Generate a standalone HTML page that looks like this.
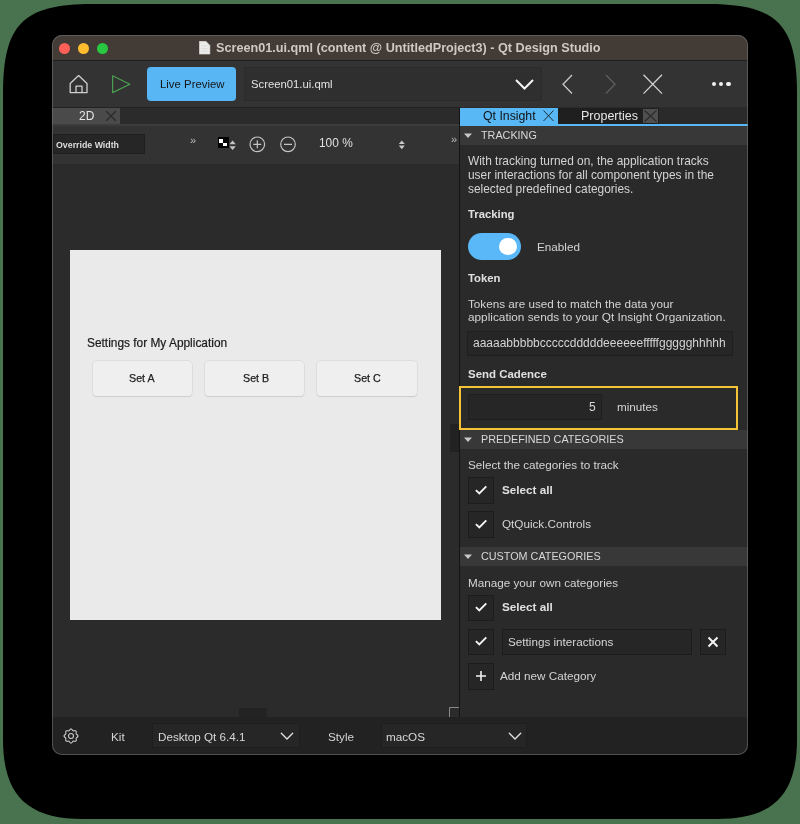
<!DOCTYPE html>
<html><head><meta charset="utf-8">
<style>
*{margin:0;padding:0;box-sizing:border-box}
html,body{width:800px;height:824px;overflow:hidden;background:#49734e;font-family:"Liberation Sans",sans-serif}
.a{position:absolute}
.t{white-space:nowrap;will-change:transform}
#win{position:absolute;left:0;top:0;width:800px;height:824px;clip-path:inset(35px 52px 69px 52px round 10px)}
</style></head><body>
<svg class="a" style="left:0;top:0" width="800" height="824"><path d="M93 4 H707 C777 4 797 24 797 94 V739 C797 795 773 819 717 819 H83 C27 819 3 795 3 739 V94 C3 24 23 4 93 4 Z" fill="#000"/></svg>
<div id="win">
<div class="a" style="left:52px;top:35px;width:696px;height:720px;background:#2b2b2b;"></div>
<div class="a" style="left:52px;top:35px;width:696px;height:26px;background:#433b35;"></div>
<div class="a" style="left:52px;top:60px;width:696px;height:1px;background:#1e1e1e;"></div>
<div class="a" style="left:58.849999999999994px;top:42.5px;width:11.5px;height:11.5px;background:#fe5f57;border-radius:50%"></div>
<div class="a" style="left:77.75px;top:42.5px;width:11.5px;height:11.5px;background:#febc2e;border-radius:50%"></div>
<div class="a" style="left:96.65px;top:42.5px;width:11.5px;height:11.5px;background:#28c840;border-radius:50%"></div>
<svg class="a" style="left:198.9px;top:40.6px" width="12" height="14" viewBox="0 0 12 14"><path d="M0.3 0.3 H6.9 L10.9 4.4 V13.1 H0.3 Z" fill="#ebebea" stroke="#d8d6d3" stroke-width="0.6"/><path d="M2.5 5 H8.5 M2.5 7.5 H8.5 M2.5 10 H8.5" stroke="#d2d2d0" stroke-width="0.6"/></svg>
<div class="a t" style="left:216px;top:41.79px;font-size:12.65px;line-height:12.65px;font-weight:bold;color:#cfc9c3;">Screen01.ui.qml (content @ UntitledProject3) - Qt Design Studio</div>
<div class="a" style="left:52px;top:61px;width:696px;height:46px;background:#333333;"></div>
<svg class="a" style="left:66px;top:72px" width="26" height="24" viewBox="0 0 26 24"><path d="M4.2 20.6 V11.4 L12.6 3.6 L21 11.4 V20.6 Z" fill="none" stroke="#d0d0d0" stroke-width="1.3" stroke-linejoin="round"/><path d="M10 20.6 V14.2 H16 V20.6" fill="none" stroke="#d0d0d0" stroke-width="1.3" stroke-linejoin="round"/></svg>
<svg class="a" style="left:108px;top:72px" width="26" height="24" viewBox="0 0 26 24"><path d="M4.6 3.8 L21.8 12.2 L4.6 20.6 Z" fill="none" stroke="#4a9e4f" stroke-width="1.25" stroke-linejoin="round"/></svg>
<div class="a" style="left:147px;top:67px;width:89px;height:34px;background:#58b6f5;border-radius:4px"></div>
<div class="a t" style="left:159.5px;top:78.95px;font-size:11.4px;line-height:11.4px;font-weight:normal;color:#161616;">Live Preview</div>
<div class="a" style="left:244px;top:67px;width:298px;height:34px;background:#2f2f2f;border:1px solid #2b2b2b"></div>
<div class="a t" style="left:251px;top:79.03px;font-size:11.3px;line-height:11.3px;font-weight:normal;color:#e2e2e2;">Screen01.ui.qml</div>
<svg class="a" style="left:512px;top:76px" width="26" height="16" viewBox="0 0 26 16"><path d="M4 4 L12.5 12.5 L21 4" fill="none" stroke="#f4f4f4" stroke-width="2"/></svg>
<svg class="a" style="left:558px;top:72px" width="20" height="24" viewBox="0 0 20 24"><path d="M14 3 L5 12.2 L14 21.5" fill="none" stroke="#c8c8c8" stroke-width="1.3"/></svg>
<svg class="a" style="left:600px;top:72px" width="20" height="24" viewBox="0 0 20 24"><path d="M6 3 L15 12.2 L6 21.5" fill="none" stroke="#5e5e5e" stroke-width="1.3"/></svg>
<svg class="a" style="left:640px;top:72px" width="26" height="24" viewBox="0 0 26 24"><path d="M3.5 2.8 L22 21.6 M22 2.8 L3.5 21.6" fill="none" stroke="#d0d0d0" stroke-width="1.3"/></svg>
<div class="a" style="left:711.5999999999999px;top:82.1px;width:4.400000000000091px;height:4.400000000000006px;background:#f0f0f0;border-radius:50%"></div>
<div class="a" style="left:719.0px;top:82.1px;width:4.400000000000091px;height:4.400000000000006px;background:#f0f0f0;border-radius:50%"></div>
<div class="a" style="left:726.4px;top:82.1px;width:4.400000000000091px;height:4.400000000000006px;background:#f0f0f0;border-radius:50%"></div>
<div class="a" style="left:52px;top:107px;width:408px;height:1px;background:#222222;"></div>
<div class="a" style="left:52px;top:108px;width:408px;height:16px;background:#2b2b2b;"></div>
<div class="a" style="left:52px;top:108px;width:68px;height:16px;background:#4a4a4a;"></div>
<div class="a t" style="left:78.5px;top:110.34px;font-size:12px;line-height:12px;font-weight:normal;color:#e6e6e6;">2D</div>
<svg class="a" style="left:104px;top:109px" width="14" height="14" viewBox="0 0 14 14"><path d="M2 2 L12 12 M12 2 L2 12" stroke="#2a2a2a" stroke-width="1.2"/></svg>
<div class="a" style="left:52px;top:124px;width:408px;height:2px;background:#3c3c3c;"></div>
<div class="a" style="left:52px;top:126px;width:408px;height:38px;background:#333333;"></div>
<div class="a" style="left:53px;top:134px;width:92px;height:20px;background:#262626;border:1px solid #1f1f1f"></div>
<div class="a t" style="left:55.7px;top:140.55px;font-size:8.8px;line-height:8.8px;font-weight:bold;color:#dcdcdc;">Override Width</div>
<div class="a t" style="left:190px;top:134.69px;font-size:11px;line-height:11px;font-weight:normal;color:#bbbbbb;">&#187;</div>
<div class="a" style="left:217.5px;top:137.3px;width:11.199999999999989px;height:10.5px;background:#000;"></div>
<div class="a" style="left:219.3px;top:138.8px;width:3.8999999999999773px;height:3.8999999999999773px;background:#fff;"></div>
<div class="a" style="left:223.2px;top:142.7px;width:3.6000000000000227px;height:3.6000000000000227px;background:#fff;"></div>
<svg class="a" style="left:229px;top:139.5px" width="8" height="11" viewBox="0 0 8 11"><path d="M0.4 4.2 L3.6 0.4 L6.8 4.2 Z M0.4 6.3 L3.6 9.9 L6.8 6.3 Z" fill="#c4c4c4"/></svg>
<svg class="a" style="left:248px;top:135px" width="18" height="18" viewBox="0 0 18 18"><circle cx="9.3" cy="9.3" r="7.3" fill="none" stroke="#c4c4c4" stroke-width="1.2"/><path d="M9.3 5.3 V13.3 M5.3 9.3 H13.3" stroke="#c4c4c4" stroke-width="1.2"/></svg>
<svg class="a" style="left:279px;top:135px" width="18" height="18" viewBox="0 0 18 18"><circle cx="9" cy="9.3" r="7.3" fill="none" stroke="#c4c4c4" stroke-width="1.2"/><path d="M5 9.3 H13" stroke="#c4c4c4" stroke-width="1.2"/></svg>
<div class="a t" style="left:318.7px;top:138.13px;font-size:11.9px;line-height:11.9px;font-weight:normal;color:#e0e0e0;">100 %</div>
<svg class="a" style="left:398px;top:140px" width="8" height="10" viewBox="0 0 8 10"><path d="M0.8 4 L3.8 0.5 L6.8 4 Z M0.8 5.6 L3.8 9.2 L6.8 5.6 Z" fill="#c8c8c8"/></svg>
<div class="a t" style="left:450.6px;top:134.19px;font-size:11px;line-height:11px;font-weight:normal;color:#bbbbbb;">&#187;</div>
<div class="a" style="left:52px;top:164px;width:408px;height:553px;background:#2b2b2b;"></div>
<div class="a" style="left:70px;top:250px;width:371px;height:370px;background:#eaeaea;"></div>
<div class="a t" style="left:87.4px;top:338.23px;font-size:11.9px;line-height:11.9px;font-weight:normal;color:#1a1a1a;-webkit-text-stroke:0.2px #1a1a1a">Settings for My Application</div>
<div class="a" style="left:92.6px;top:360.5px;width:99.20000000000002px;height:35.5px;background:#efefef;border-radius:4px;box-shadow:0 0 0 0.5px #d2d2d2,0 1px 1px #c8c8c8"></div>
<div class="a t" style="left:129.4px;top:373.34px;font-size:10.7px;line-height:10.7px;font-weight:normal;color:#222222;-webkit-text-stroke:0.25px #222">Set A</div>
<div class="a" style="left:205.2px;top:360.5px;width:99.30000000000001px;height:35.5px;background:#efefef;border-radius:4px;box-shadow:0 0 0 0.5px #d2d2d2,0 1px 1px #c8c8c8"></div>
<div class="a t" style="left:242.5px;top:373.34px;font-size:10.7px;line-height:10.7px;font-weight:normal;color:#222222;-webkit-text-stroke:0.25px #222">Set B</div>
<div class="a" style="left:316.5px;top:360.5px;width:100.69999999999999px;height:35.5px;background:#efefef;border-radius:4px;box-shadow:0 0 0 0.5px #d2d2d2,0 1px 1px #c8c8c8"></div>
<div class="a t" style="left:353.6px;top:373.34px;font-size:10.7px;line-height:10.7px;font-weight:normal;color:#222222;-webkit-text-stroke:0.25px #222">Set C</div>
<div class="a" style="left:239px;top:708px;width:28px;height:9px;background:#232323;"></div>
<svg class="a" style="left:449px;top:707px" width="11" height="11" viewBox="0 0 11 11"><path d="M0.5 11 V0.5 H10" fill="none" stroke="#8a8a8a" stroke-width="1"/></svg>
<div class="a" style="left:459px;top:108px;width:1px;height:609px;background:#141414;"></div>
<div class="a" style="left:450.3px;top:424px;width:8.699999999999989px;height:28px;background:#222222;"></div>
<div class="a" style="left:460px;top:108px;width:288px;height:609px;background:#2a2a2a;"></div>
<div class="a" style="left:460px;top:108px;width:98px;height:16px;background:#58b8f6;"></div>
<div class="a t" style="left:482.6px;top:110.09px;font-size:12.3px;line-height:12.3px;font-weight:normal;color:#111111;">Qt Insight</div>
<svg class="a" style="left:541px;top:109px" width="14" height="14" viewBox="0 0 14 14"><path d="M2.5 1.5 L12.5 12 M12.5 1.5 L2.5 12" stroke="#1d2c36" stroke-width="1"/></svg>
<div class="a" style="left:558px;top:108px;width:101px;height:16px;background:#1f1f1f;"></div>
<div class="a t" style="left:580.5px;top:109.92px;font-size:12.5px;line-height:12.5px;font-weight:normal;color:#e6e6e6;">Properties</div>
<div class="a" style="left:659px;top:108px;width:1px;height:16px;background:#3a3a3a;"></div>
<div class="a" style="left:643px;top:109px;width:15px;height:14px;background:#505050;"></div>
<svg class="a" style="left:643px;top:109px" width="15" height="14" viewBox="0 0 15 14"><path d="M1.5 1.5 L13.5 12.5 M13.5 1.5 L1.5 12.5" stroke="#2b2b2b" stroke-width="1.1"/></svg>
<div class="a" style="left:659px;top:108px;width:89px;height:16px;background:#2a2a2a;"></div>
<div class="a" style="left:460px;top:124px;width:288px;height:2px;background:#58b8f6;"></div>
<div class="a" style="left:460px;top:126px;width:288px;height:19px;background:#383838;"></div>
<svg class="a" style="left:463px;top:133px" width="10" height="6" viewBox="0 0 10 6"><path d="M1 0.5 H9 L5 5 Z" fill="#c8c8c8"/></svg>
<div class="a t" style="left:481px;top:130.46px;font-size:10.8px;line-height:10.8px;font-weight:normal;color:#d8d8d8;">TRACKING</div>
<div class="a t" style="left:468px;top:156.13px;font-size:11.9px;line-height:11.9px;font-weight:normal;color:#d4d4d4;">With tracking turned on, the application tracks</div>
<div class="a t" style="left:468px;top:170.13px;font-size:11.9px;line-height:11.9px;font-weight:normal;color:#d4d4d4;">user interactions for all component types in the</div>
<div class="a t" style="left:468px;top:184.13px;font-size:11.9px;line-height:11.9px;font-weight:normal;color:#d4d4d4;">selected predefined categories.</div>
<div class="a t" style="left:468.4px;top:209.43px;font-size:11.3px;line-height:11.3px;font-weight:bold;color:#e0e0e0;">Tracking</div>
<div class="a" style="left:467.6px;top:233px;width:53.39999999999998px;height:27px;background:#5ab8f9;border-radius:14px"></div>
<div class="a" style="left:499.15px;top:237.95px;width:17.5px;height:17.5px;background:#ffffff;border-radius:50%"></div>
<div class="a t" style="left:536.6px;top:240.50px;font-size:11.7px;line-height:11.7px;font-weight:normal;color:#d4d4d4;">Enabled</div>
<div class="a t" style="left:468.4px;top:273.03px;font-size:11.3px;line-height:11.3px;font-weight:bold;color:#e0e0e0;">Token</div>
<div class="a t" style="left:468px;top:298.10px;font-size:11.7px;line-height:11.7px;font-weight:normal;color:#d4d4d4;">Tokens are used to match the data your</div>
<div class="a t" style="left:468px;top:311.51px;font-size:11.8px;line-height:11.8px;font-weight:normal;color:#d4d4d4;">application sends to your Qt Insight Organization.</div>
<div class="a" style="left:467px;top:330.5px;width:266px;height:25.5px;background:#262626;border:1px solid #1f1f1f"></div>
<div class="a t" style="left:473.4px;top:336.84px;font-size:12px;line-height:12px;font-weight:normal;color:#d4d4d4;">aaaaabbbbbcccccdddddeeeeeefffffggggghhhhh</div>
<div class="a t" style="left:468px;top:369.01px;font-size:11.45px;line-height:11.45px;font-weight:bold;color:#e0e0e0;">Send Cadence</div>
<div class="a" style="left:459px;top:386px;width:279px;height:44px;background:transparent;border:2.5px solid #f5c436"></div>
<div class="a" style="left:468px;top:393.6px;width:134px;height:26.399999999999977px;background:#262626;border:1px solid #1f1f1f"></div>
<div class="a t" style="left:589px;top:400.84px;font-size:12px;line-height:12px;font-weight:normal;color:#d8d8d8;">5</div>
<div class="a t" style="left:617px;top:401.10px;font-size:11.7px;line-height:11.7px;font-weight:normal;color:#d4d4d4;">minutes</div>
<div class="a" style="left:460px;top:430px;width:288px;height:19px;background:#383838;"></div>
<svg class="a" style="left:463px;top:437px" width="10" height="6" viewBox="0 0 10 6"><path d="M1 0.5 H9 L5 5 Z" fill="#c8c8c8"/></svg>
<div class="a t" style="left:481px;top:434.46px;font-size:10.8px;line-height:10.8px;font-weight:normal;color:#d8d8d8;">PREDEFINED CATEGORIES</div>
<div class="a t" style="left:468px;top:458.90px;font-size:11.7px;line-height:11.7px;font-weight:normal;color:#d4d4d4;">Select the categories to track</div>
<div class="a" style="left:467.6px;top:477px;width:26.399999999999977px;height:26.5px;background:#262626;border:1px solid #1c1c1c"></div>
<svg class="a" style="left:474px;top:483.5px" width="14" height="12" viewBox="0 0 14 12"><path d="M1.9 6.1 L5.3 9.5 L12.3 2.4" fill="none" stroke="#f4f4f4" stroke-width="1.9"/></svg>
<div class="a t" style="left:502px;top:483.70px;font-size:11.7px;line-height:11.7px;font-weight:bold;color:#e0e0e0;">Select all</div>
<div class="a" style="left:467.6px;top:511px;width:26.399999999999977px;height:26.5px;background:#262626;border:1px solid #1c1c1c"></div>
<svg class="a" style="left:474px;top:517.5px" width="14" height="12" viewBox="0 0 14 12"><path d="M1.9 6.1 L5.3 9.5 L12.3 2.4" fill="none" stroke="#f4f4f4" stroke-width="1.9"/></svg>
<div class="a t" style="left:502px;top:517.70px;font-size:11.7px;line-height:11.7px;font-weight:normal;color:#d4d4d4;">QtQuick.Controls</div>
<div class="a" style="left:460px;top:547px;width:288px;height:19px;background:#383838;"></div>
<svg class="a" style="left:463px;top:554px" width="10" height="6" viewBox="0 0 10 6"><path d="M1 0.5 H9 L5 5 Z" fill="#c8c8c8"/></svg>
<div class="a t" style="left:481px;top:551.46px;font-size:10.8px;line-height:10.8px;font-weight:normal;color:#d8d8d8;">CUSTOM CATEGORIES</div>
<div class="a t" style="left:468px;top:576.80px;font-size:11.7px;line-height:11.7px;font-weight:normal;color:#d4d4d4;">Manage your own categories</div>
<div class="a" style="left:467.6px;top:594.5px;width:26.399999999999977px;height:26.5px;background:#262626;border:1px solid #1c1c1c"></div>
<svg class="a" style="left:474px;top:601.0px" width="14" height="12" viewBox="0 0 14 12"><path d="M1.9 6.1 L5.3 9.5 L12.3 2.4" fill="none" stroke="#f4f4f4" stroke-width="1.9"/></svg>
<div class="a t" style="left:502px;top:600.90px;font-size:11.7px;line-height:11.7px;font-weight:bold;color:#e0e0e0;">Select all</div>
<div class="a" style="left:467.6px;top:628.7px;width:26.399999999999977px;height:26.5px;background:#262626;border:1px solid #1c1c1c"></div>
<svg class="a" style="left:474px;top:635.2px" width="14" height="12" viewBox="0 0 14 12"><path d="M1.9 6.1 L5.3 9.5 L12.3 2.4" fill="none" stroke="#f4f4f4" stroke-width="1.9"/></svg>
<div class="a" style="left:502px;top:628.7px;width:190px;height:26.299999999999955px;background:#262626;border:1px solid #1c1c1c"></div>
<div class="a t" style="left:508px;top:635.80px;font-size:11.7px;line-height:11.7px;font-weight:normal;color:#d4d4d4;">Settings interactions</div>
<div class="a" style="left:700px;top:628.7px;width:26px;height:26.299999999999955px;background:#262626;border:1px solid #1c1c1c"></div>
<svg class="a" style="left:706px;top:635px" width="14" height="14" viewBox="0 0 14 14"><path d="M2.5 2.5 L11.5 11.5 M11.5 2.5 L2.5 11.5" stroke="#f2f2f2" stroke-width="2"/></svg>
<div class="a" style="left:467.6px;top:663px;width:26.399999999999977px;height:26.5px;background:#262626;border:1px solid #1c1c1c"></div>
<svg class="a" style="left:474px;top:669.2px" width="14" height="14" viewBox="0 0 14 14"><path d="M7 2 V12 M2 7 H12" stroke="#f2f2f2" stroke-width="1.6"/></svg>
<div class="a t" style="left:500px;top:670.10px;font-size:11.7px;line-height:11.7px;font-weight:normal;color:#d4d4d4;">Add new Category</div>
<div class="a" style="left:52px;top:717px;width:696px;height:38px;background:#222222;"></div>
<svg class="a" style="left:62px;top:727px" width="18" height="18" viewBox="0 0 18 18"><path d="M9.00 2.00 L9.36 2.07 L9.71 2.27 L10.02 2.56 L10.29 2.91 L10.54 3.25 L10.77 3.55 L11.01 3.76 L11.28 3.87 L11.60 3.89 L11.97 3.85 L12.39 3.78 L12.83 3.73 L13.26 3.74 L13.64 3.84 L13.95 4.05 L14.16 4.36 L14.26 4.74 L14.27 5.17 L14.22 5.61 L14.15 6.03 L14.11 6.40 L14.13 6.72 L14.24 6.99 L14.45 7.23 L14.75 7.46 L15.09 7.71 L15.44 7.98 L15.73 8.29 L15.93 8.64 L16.00 9.00 L15.93 9.36 L15.73 9.71 L15.44 10.02 L15.09 10.29 L14.75 10.54 L14.45 10.77 L14.24 11.01 L14.13 11.28 L14.11 11.60 L14.15 11.97 L14.22 12.39 L14.27 12.83 L14.26 13.26 L14.16 13.64 L13.95 13.95 L13.64 14.16 L13.26 14.26 L12.83 14.27 L12.39 14.22 L11.97 14.15 L11.60 14.11 L11.28 14.13 L11.01 14.24 L10.77 14.45 L10.54 14.75 L10.29 15.09 L10.02 15.44 L9.71 15.73 L9.36 15.93 L9.00 16.00 L8.64 15.93 L8.29 15.73 L7.98 15.44 L7.71 15.09 L7.46 14.75 L7.23 14.45 L6.99 14.24 L6.72 14.13 L6.40 14.11 L6.03 14.15 L5.61 14.22 L5.17 14.27 L4.74 14.26 L4.36 14.16 L4.05 13.95 L3.84 13.64 L3.74 13.26 L3.73 12.83 L3.78 12.39 L3.85 11.98 L3.89 11.60 L3.87 11.28 L3.76 11.01 L3.55 10.77 L3.25 10.54 L2.91 10.29 L2.56 10.02 L2.27 9.71 L2.07 9.36 L2.00 9.00 L2.07 8.64 L2.27 8.29 L2.56 7.98 L2.91 7.71 L3.25 7.46 L3.55 7.23 L3.76 6.99 L3.87 6.72 L3.89 6.40 L3.85 6.02 L3.78 5.61 L3.73 5.17 L3.74 4.74 L3.84 4.36 L4.05 4.05 L4.36 3.84 L4.74 3.74 L5.17 3.73 L5.61 3.78 L6.03 3.85 L6.40 3.89 L6.72 3.87 L6.99 3.76 L7.23 3.55 L7.46 3.25 L7.71 2.91 L7.98 2.56 L8.29 2.27 L8.64 2.07 Z" fill="none" stroke="#cfcfcf" stroke-width="1.05" stroke-linejoin="round"/><circle cx="9" cy="9" r="2.5" fill="none" stroke="#cfcfcf" stroke-width="1.05"/></svg>
<div class="a t" style="left:111.4px;top:730.70px;font-size:11.7px;line-height:11.7px;font-weight:normal;color:#d4d4d4;">Kit</div>
<div class="a" style="left:152px;top:723.4px;width:147.5px;height:25.0px;background:#262626;border:1px solid #1e1e1e"></div>
<div class="a t" style="left:157.6px;top:730.74px;font-size:11.65px;line-height:11.65px;font-weight:normal;color:#d8d8d8;">Desktop Qt 6.4.1</div>
<svg class="a" style="left:279px;top:731px" width="16" height="11" viewBox="0 0 16 11"><path d="M2.3 2.3 L8 8 L13.7 2.3" fill="none" stroke="#e0e0e0" stroke-width="1.35" stroke-linecap="round"/></svg>
<div class="a t" style="left:327.5px;top:730.70px;font-size:11.7px;line-height:11.7px;font-weight:normal;color:#d4d4d4;">Style</div>
<div class="a" style="left:380.6px;top:723.4px;width:146.89999999999998px;height:25.0px;background:#262626;border:1px solid #1e1e1e"></div>
<div class="a t" style="left:386px;top:730.70px;font-size:11.7px;line-height:11.7px;font-weight:normal;color:#d8d8d8;">macOS</div>
<svg class="a" style="left:506.5px;top:731px" width="16" height="11" viewBox="0 0 16 11"><path d="M2.3 2.3 L8 8 L13.7 2.3" fill="none" stroke="#e0e0e0" stroke-width="1.35" stroke-linecap="round"/></svg>
</div>
<div class="a" style="left:52px;top:35px;width:696px;height:720px;background:transparent;border-radius:10px;box-shadow:inset 0 0 0 1px rgba(128,128,128,0.5)"></div>
</body></html>
